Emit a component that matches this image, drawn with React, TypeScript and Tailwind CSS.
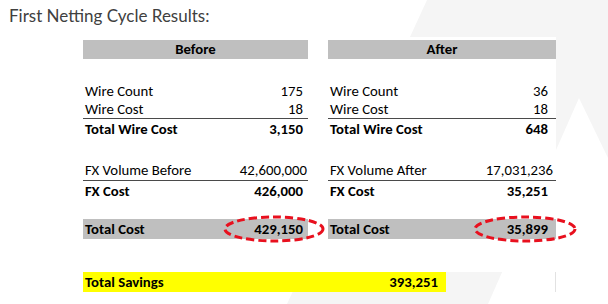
import React from "react";

const cal = { fontFamily: "Carlito, Lato, 'Liberation Sans', sans-serif" };

function Ellipse({ left, width }: { left: number; width: number }) {
  return (
    <svg
      className="absolute pointer-events-none"
      style={{ left, top: -4, width, height: 28 }}
      viewBox={`0 0 ${width} 28`}
    >
      <ellipse
        cx={width / 2}
        cy={14}
        rx={width / 2 - 2}
        ry={12}
        fill="none"
        stroke="#e8101e"
        strokeWidth={3}
        strokeDasharray="8 4"
      />
    </svg>
  );
}

type Col = {
  title: string;
  width: string;
  wc: string;
  wcost: string;
  twc: string;
  fxLabel: string;
  fxVol: string;
  fxCost: string;
  total: string;
  valPad: string;
  fxPad: string;
  ellipseLeft: number;
  ellipseW: number;
};

function Column({ c }: { c: Col }) {
  return (
    <div className={`${c.width} flex flex-col text-[14.75px] text-black`} style={cal}>
      <div className="h-[19px] bg-[#bfbfbf] flex items-center justify-center font-bold">
        {c.title}
      </div>
      <div className="h-[22px]" />
      <div className="h-[20px] flex items-center justify-between pl-[2px]">
        <span>Wire Count</span>
        <span className={c.valPad}>{c.wc}</span>
      </div>
      <div className="h-[18px] flex items-center justify-between pl-[2px] border-b border-[#4a4a4a]">
        <span>Wire Cost</span>
        <span className={c.valPad}>{c.wcost}</span>
      </div>
      <div className="h-[21px] flex items-center justify-between pl-[2px] font-bold">
        <span>Total Wire Cost</span>
        <span className={c.valPad}>{c.twc}</span>
      </div>
      <div className="h-[21px]" />
      <div className="h-[20px] flex items-center justify-between pl-[2px] border-b border-[#4a4a4a]">
        <span>{c.fxLabel}</span>
        <span className={c.fxPad}>{c.fxVol}</span>
      </div>
      <div className="h-[20px] flex items-center justify-between pl-[2px] font-bold">
        <span>FX Cost</span>
        <span className={c.valPad}>{c.fxCost}</span>
      </div>
      <div className="h-[18px]" />
      <div className="relative h-[20px] flex items-center justify-between pl-[2px] font-bold bg-[#bfbfbf]">
        <span>Total Cost</span>
        <span className={c.valPad}>{c.total}</span>
        <Ellipse left={c.ellipseLeft} width={c.ellipseW} />
      </div>
      <div className="h-[33px]" />
    </div>
  );
}

export default function App() {
  const before: Col = {
    title: "Before",
    width: "w-[225px]",
    wc: "175",
    wcost: "18",
    twc: "3,150",
    fxLabel: "FX Volume Before",
    fxVol: "42,600,000",
    fxCost: "426,000",
    total: "429,150",
    valPad: "pr-[5px]",
    fxPad: "pr-[1px]",
    ellipseLeft: 140,
    ellipseW: 102,
  };
  const after: Col = {
    title: "After",
    width: "w-[228px]",
    wc: "36",
    wcost: "18",
    twc: "648",
    fxLabel: "FX Volume After",
    fxVol: "17,031,236",
    fxCost: "35,251",
    total: "35,899",
    valPad: "pr-[8px]",
    fxPad: "pr-[3px]",
    ellipseLeft: 145,
    ellipseW: 104,
  };
  return (
    <div className="relative w-[608px] h-[304px] bg-white overflow-hidden">
      <svg className="absolute inset-0" width="608" height="304" viewBox="0 0 608 304">
        <polygon
          points="427,0 608,0 608,158 579,98 488,304 287,304"
          fill="#f5f5f5"
        />
      </svg>
      <div className="relative">
        <p
          className="pt-[6px] pl-[9px] text-[17px] leading-[20px] text-[#404040]"
          style={{ fontFamily: "Lato, 'Open Sans', sans-serif" }}
        >
          First Netting Cycle Results:
        </p>
        <div className="mt-[11px] ml-[80px] w-[476px] bg-white pt-[3px] pl-[3px] flex gap-[20px]">
          <Column c={before} />
          <Column c={after} />
        </div>
        <div
          className="ml-[83px] w-[473px] h-[20px] flex border-r border-[#e2e2e2] text-[14.75px] font-bold text-black"
          style={cal}
        >
          <div className="w-[363px] bg-[#ffff00] flex items-center justify-between pl-[2px] pr-[8px]">
            <span>Total Savings</span>
            <span>393,251</span>
          </div>
        </div>
      </div>
    </div>
  );
}
